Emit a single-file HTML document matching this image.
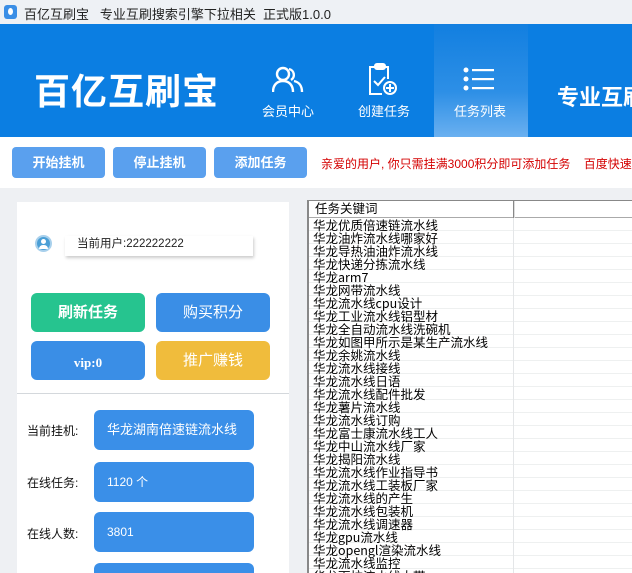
<!DOCTYPE html>
<html><head><meta charset="utf-8"><style>
*{margin:0;padding:0;box-sizing:border-box}
html{width:632px;height:573px;overflow:hidden}
body{width:632px;height:573px;overflow:hidden;background:#eef0f3;font-family:"Liberation Sans","Noto Sans CJK SC",sans-serif;position:relative}
.a{position:absolute}
.btn{position:absolute;border-radius:4px;background:#5aa0ee;color:#fff;font-weight:bold;font-size:13px;text-align:center;line-height:31px}
.pb{position:absolute;border-radius:6px;color:#fff;text-align:center;font-size:15px;font-weight:bold;line-height:39px}
.lbl{position:absolute;left:27px;font-size:12px;color:#111}
.box{position:absolute;left:94px;width:160px;height:40px;border-radius:6px;background:#3a8fe8;color:#fff;font-size:12px;line-height:40px;padding-left:13px}
.row{height:13px;line-height:13px;font-size:12.5px;border-bottom:1px solid #eef0f0;padding-left:4px;color:#000;white-space:nowrap;font-family:"WenQuanYi Zen Hei","Noto Sans CJK SC",sans-serif}
</style></head><body>
<div class="a" style="left:0;top:0;width:632px;height:24px;background:#eef1f5"></div>
<div class="a" style="left:4px;top:5px;width:13px;height:14px;background:#3a8ee6;border-radius:3px"></div>
<div class="a" style="left:8px;top:8px;width:5px;height:7px;border-radius:50%;background:#fff"></div>
<div class="a" style="left:24px;top:4px;font-size:13px;color:#222">百亿互刷宝&nbsp;&nbsp;&nbsp;专业互刷搜索引擎下拉相关&nbsp;&nbsp;正式版1.0.0</div>
<div class="a" style="left:0;top:24px;width:632px;height:113px;background:#0b7ee2"></div>
<div class="a" style="left:434px;top:24px;width:94px;height:113px;background:linear-gradient(#127fe0,#2d8fe6 60%,#6ab0f0)"></div>
<div class="a" style="left:34px;top:63px;font-size:36px;font-weight:bold;color:#fff;letter-spacing:1px">百亿互刷宝</div>
<svg class="a" style="left:272px;top:66px" width="32" height="28" viewBox="0 0 32 28" fill="none" stroke="#fff" stroke-width="2.4"><circle cx="11" cy="8" r="6"/><path d="M1 26c0-7 4-11 10-11s10 4 10 11"/><path d="M17 3a6 6 0 0 1 2 11M22 15c5 1 8 5 8 11"/></svg>
<div class="a" style="left:262px;top:101px;font-size:13px;color:#fff">会员中心</div>
<svg class="a" style="left:368px;top:62px" width="30" height="34" viewBox="0 0 30 34" fill="none" stroke="#fff" stroke-width="2"><path d="M8 5H2v27h12"/><path d="M16 5h4v12"/><rect x="7" y="2" width="10" height="5" rx="2" fill="#fff"/><path d="M6 19l4 4 7-8"/><circle cx="22" cy="26" r="6"/><path d="M22 22v8M18 26h8"/></svg>
<div class="a" style="left:358px;top:101px;font-size:13px;color:#fff">创建任务</div>
<svg class="a" style="left:463px;top:67px" width="32" height="24" viewBox="0 0 32 24" fill="#fff"><circle cx="3" cy="3" r="2.5"/><circle cx="3" cy="12" r="2.5"/><circle cx="3" cy="21" r="2.5"/><rect x="9" y="2" width="22" height="2.2"/><rect x="9" y="11" width="22" height="2.2"/><rect x="9" y="20" width="22" height="2.2"/></svg>
<div class="a" style="left:454px;top:101px;font-size:13px;color:#fff">任务列表</div>
<div class="a" style="left:557px;top:80px;font-size:22px;font-weight:bold;color:#fff;white-space:nowrap">专业互刷</div>
<div class="a" style="left:0;top:137px;width:632px;height:51px;background:#fff"></div>
<div class="btn" style="left:12px;top:147px;width:93px;height:31px">开始挂机</div>
<div class="btn" style="left:113px;top:147px;width:93px;height:31px">停止挂机</div>
<div class="btn" style="left:214px;top:147px;width:93px;height:31px">添加任务</div>
<div class="a" style="left:321px;top:155px;font-size:12px;color:#d40000;white-space:nowrap">亲爱的用户, 你只需挂满3000积分即可添加任务&nbsp;&nbsp;&nbsp;&nbsp;百度快速</div>
<div class="a" style="left:17px;top:202px;width:272px;height:371px;background:#fff"></div>
<div class="a" style="left:35px;top:235px;width:17px;height:17px;border-radius:50%;background:#4b9fd6;border:2px solid #a8d0ec"></div>
<div class="a" style="left:41px;top:239px;width:5px;height:5px;border-radius:50%;background:#fff"></div>
<div class="a" style="left:39px;top:245px;width:9px;height:4px;border-radius:4px 4px 0 0;background:#fff"></div>
<div class="a" style="left:65px;top:236px;width:188px;height:20px;background:#fff;box-shadow:1px 2px 3px #ccc;font-size:11.5px;line-height:17px;padding-left:12px;color:#222">当前用户:222222222</div>
<div class="pb" style="left:31px;top:293px;width:114px;height:39px;background:#26c48f">刷新任务</div>
<div class="pb" style="left:156px;top:293px;width:114px;height:39px;background:#3a8ee6;font-weight:normal">购买积分</div>
<div class="pb" style="left:31px;top:341px;width:114px;height:39px;background:#3a8ee6;font-family:'Liberation Serif',serif;font-size:13px;line-height:44px">vip:0</div>
<div class="pb" style="left:156px;top:341px;width:114px;height:39px;background:#f0bc3c;font-weight:normal">推广赚钱</div>
<div class="a" style="left:17px;top:393px;width:272px;height:1px;background:#d4d8dc"></div>
<div class="lbl" style="top:422px">当前挂机:</div><div class="box" style="top:410px;font-size:13px">华龙湖南倍速链流水线</div>
<div class="lbl" style="top:474px">在线任务:</div><div class="box" style="top:462px">1120 个</div>
<div class="lbl" style="top:525px">在线人数:</div><div class="box" style="top:512px">3801</div>
<div class="box" style="top:563px;height:10px;border-radius:6px 6px 0 0"></div>
<div class="a" style="left:307px;top:200px;width:325px;height:373px;overflow:hidden;background:#fff;border-left:2px solid #888;border-top:1px solid #888">
<div style="height:17px;border-bottom:1px solid #aaa;font-size:12.5px;line-height:16px;padding-left:6px;position:relative;background:#fff">任务关键词<div style="position:absolute;left:204px;top:0;width:2px;height:17px;border-left:1px solid #888;border-right:1px solid #ddd"></div></div>
<div class="a" style="left:204px;top:17px;width:1px;height:356px;background:#e4e6e8"></div>
<div class="row">华龙优质倍速链流水线</div><div class="row">华龙油炸流水线哪家好</div><div class="row">华龙导热油油炸流水线</div><div class="row">华龙快递分拣流水线</div><div class="row">华龙arm7</div><div class="row">华龙网带流水线</div><div class="row">华龙流水线cpu设计</div><div class="row">华龙工业流水线铝型材</div><div class="row">华龙全自动流水线洗碗机</div><div class="row">华龙如图甲所示是某生产流水线</div><div class="row">华龙余姚流水线</div><div class="row">华龙流水线接线</div><div class="row">华龙流水线日语</div><div class="row">华龙流水线配件批发</div><div class="row">华龙薯片流水线</div><div class="row">华龙流水线订购</div><div class="row">华龙富士康流水线工人</div><div class="row">华龙中山流水线厂家</div><div class="row">华龙揭阳流水线</div><div class="row">华龙流水线作业指导书</div><div class="row">华龙流水线工装板厂家</div><div class="row">华龙流水线的产生</div><div class="row">华龙流水线包装机</div><div class="row">华龙流水线调速器</div><div class="row">华龙gpu流水线</div><div class="row">华龙opengl渲染流水线</div><div class="row">华龙流水线监控</div><div class="row">华龙下拉流水线大带</div>
</div>
</body></html>
